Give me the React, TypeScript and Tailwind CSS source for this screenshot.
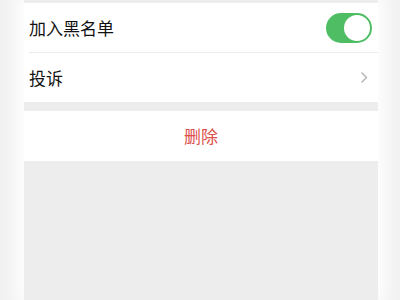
import { useState } from 'react'

export default function App() {
  const [blocked, setBlocked] = useState(true)

  return (
    <div
      className="w-[400px] h-[300px] overflow-hidden bg-[#f1f1f1] flex pl-[24px]"
      style={{ fontFamily: '"Noto Sans CJK SC", "Noto Sans", sans-serif' }}
    >
      <div className="w-[354px] h-full bg-[#ededed] pt-[3px] shadow-[0_0_18px_8px_#ffffff]">
        <div className="bg-white">
          <div className="h-[49px] flex items-center justify-between pl-[5px] pr-[6px]">
            <span className="text-[17px] text-[#111]">加入黑名单</span>
            <button
              onClick={() => setBlocked(!blocked)}
              className={`w-[46px] h-[30px] rounded-full relative border-2 ${
                blocked ? 'bg-[#4fbd63] border-[#4fbd63]' : 'bg-[#e5e5e5] border-[#e5e5e5]'
              }`}
            >
              <span
                className={`absolute top-0 w-[26px] h-[26px] rounded-full bg-white ${
                  blocked ? 'right-0' : 'left-0'
                }`}
              />
            </button>
          </div>
          <div className="ml-[5px] h-px bg-[#ececec]" />
          <div className="h-[49px] flex items-center justify-between pl-[5px] pr-[10px]">
            <span className="text-[17px] text-[#111]">投诉</span>
            <svg width="8" height="13" viewBox="0 0 8 13" fill="none">
              <path d="M1.5 1.5l5 5-5 5" stroke="#b2b2b2" strokeWidth="1.4" />
            </svg>
          </div>
        </div>
        <div className="h-[9px]" />
        <div className="bg-white h-[50px] flex items-center justify-center">
          <span className="text-[17px] text-[#de4f4b]">删除</span>
        </div>
      </div>
    </div>
  )
}
